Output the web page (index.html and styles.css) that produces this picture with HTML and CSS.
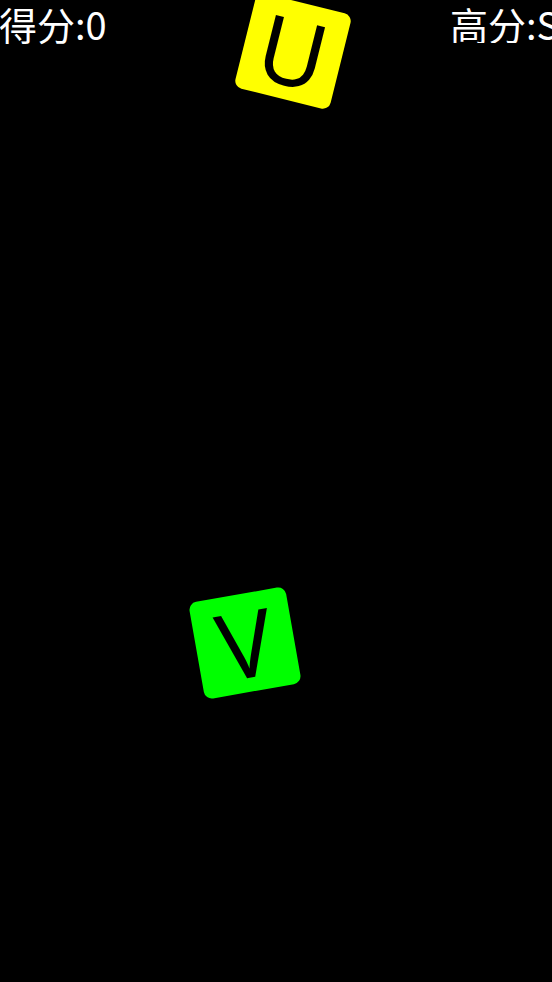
FILE: index.html
```
<!DOCTYPE html>
<html lang="zh">
<head>
<meta charset="utf-8">
<title>字母游戏</title>
<link rel="stylesheet" href="styles.css">
</head>
<body>
<div class="stage">
  <div class="hud">
    <div class="score">得分:0</div>
    <div class="best">高分:S</div>
  </div>
  <div class="tile tile-yellow">U</div>
  <div class="tile tile-green">V</div>
</div>
</body>
</html>
```
FILE: styles.css
```
html, body {
  margin: 0;
  padding: 0;
  background: #000;
}
.stage {
  position: relative;
  width: 552px;
  height: 982px;
  overflow: hidden;
  background: #000;
}
.hud {
  display: flex;
  justify-content: space-between;
  padding-top: 5px;
  font-family: "Noto Sans CJK SC", "Noto Sans", sans-serif;
  font-size: 38px;
  line-height: 38px;
  color: #fff;
  white-space: nowrap;
}
.score {
  margin-left: -1px;
}
.best {
  width: 102px;
  overflow: hidden;
}
.tile {
  position: absolute;
  width: 98px;
  height: 98px;
  border-radius: 8px;
  display: flex;
  align-items: center;
  justify-content: center;
  font-family: "Noto Sans", sans-serif;
  font-size: 92px;
  line-height: 1;
  color: #000;
}
.tile-yellow {
  left: 244px;
  top: 2px;
  background: #ffff00;
  transform: rotate(14deg);
}
.tile-green {
  left: 196px;
  top: 594px;
  background: #00ff00;
  transform: rotate(-10deg);
}
```
